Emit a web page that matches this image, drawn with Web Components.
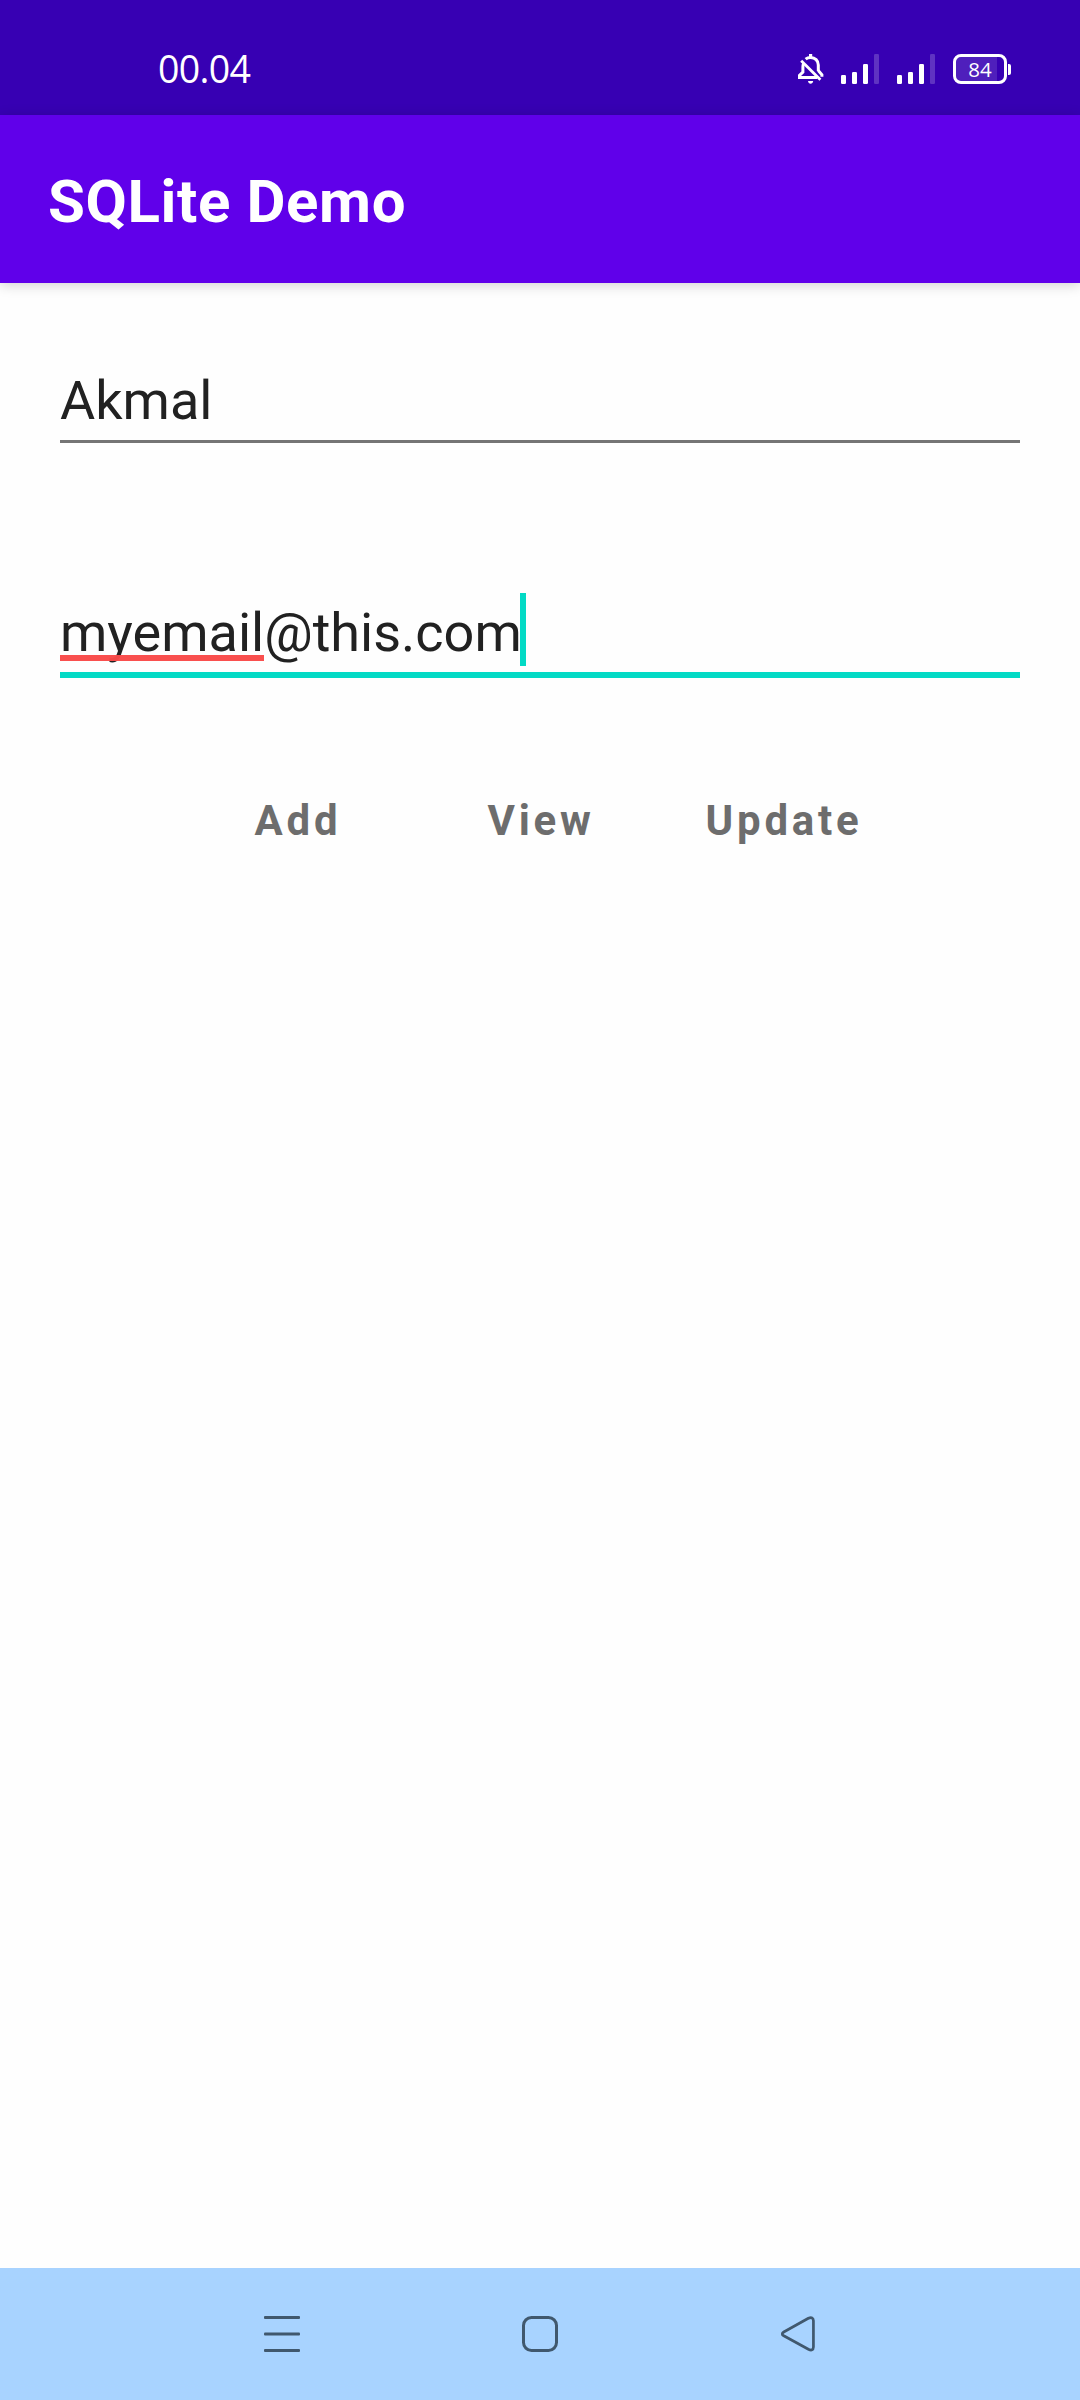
<!DOCTYPE html>
<html lang="en">
<head>
<meta charset="utf-8">
<title>SQLite Demo</title>
<style>
html,body{margin:0;padding:0}
body{width:1080px;height:2400px;overflow:hidden;background:#fefefe;font-family:Roboto,sans-serif}
</style>
</head>
<body>
<demo-screen></demo-screen>
<script>
const define = (name, html) => customElements.define(name, class extends HTMLElement {
  constructor() {
    super();
    this.attachShadow({ mode: 'open' }).innerHTML = html;
  }
});

define('mute-icon', `
<style>:host{display:block;width:26px;height:30px}svg{display:block}</style>
<svg width="26" height="30" viewBox="0 0 26 30" fill="none" stroke="#fff" stroke-width="3">
  <path d="M7.600 5.200C9 4 10.700 3.400 12.600 3.400c4.600 0 7.700 3.300 7.700 7.600v6"/>
  <path d="M5.600 9.300c-.5 1-.7 2.200-.7 3.400v5.300L1.500 21.300v2.200H19"/>
  <path d="M3.200 6.800 22.400 25.700" stroke-width="2.800"/>
  <path d="M20.300 16.600l3.600 4.200v2"/>
  <path d="M11 3V0h3.200v3zM10 27h5.200c-.3 1.700-1.200 2.800-2.600 2.800S10.300 28.700 10 27z" fill="#fff" stroke="none"/>
</svg>`);

define('signal-icon', `
<style>:host{display:block;width:38px;height:30px}svg{display:block}</style>
<svg width="38" height="30" viewBox="0 0 38 30" fill="#fff">
  <rect x="0" y="21" width="5" height="9" rx="1.2"/>
  <rect x="11" y="18" width="5" height="12" rx="1.2"/>
  <rect x="22" y="10" width="5" height="20" rx="1.2"/>
  <rect x="33" y="0" width="5" height="30" rx="1.2" opacity=".2"/>
</svg>`);

define('battery-icon', `
<style>
:host{display:flex;align-items:center;gap:1px;height:30px}
.cell{box-sizing:border-box;width:54px;height:30px;border:3px solid #fff;border-radius:8px;display:flex;align-items:center;justify-content:center;
background:linear-gradient(90deg,rgba(255,255,255,.12) 41px,transparent 41px) padding-box;color:#fff;font:400 20.500px/24px "Open Sans",sans-serif}
.tip{width:3px;height:11px;background:#fff;border-radius:0 2px 2px 0}
</style>
<div class="cell"><slot></slot></div><div class="tip"></div>`);

define('status-bar', `
<style>
:host{box-sizing:border-box;display:flex;align-items:flex-start;justify-content:space-between;height:115px;padding:54px 69px 0 158px;background:#3700b3}
.time{color:#fff;font:400 37.500px/29px "Open Sans",sans-serif;letter-spacing:-.7px}
.icons{display:flex;align-items:center}
signal-icon{margin-right:18px}
mute-icon{margin-right:17px}
</style>
<div class="time"><slot></slot></div>
<div class="icons"><mute-icon></mute-icon><signal-icon></signal-icon><signal-icon></signal-icon><battery-icon>84</battery-icon></div>`);

define('app-bar', `
<style>
:host{box-sizing:border-box;display:flex;align-items:center;height:168px;padding:5px 48px 0;background:#6000ea;color:#fff;
font:700 60px/70px Roboto,sans-serif;letter-spacing:.6px;box-shadow:0 2px 12px rgba(0,0,0,.18)}
</style><slot></slot>`);

define('text-field', `
<style>
:host{display:flex;box-sizing:border-box;height:79px;align-items:flex-start;border-bottom:3px solid #757575;color:#212121;font:400 54px/73px Roboto,sans-serif}
:host([focused]){height:85px;line-height:79px;border-bottom:6px solid #03dac5}
.caret{display:none;width:6px;height:73px;margin-left:-2px;background:#03dac5}
:host([focused]) .caret{display:block}
</style><slot></slot><span class="caret"></span>`);

define('misspelled-word', `
<style>
:host{display:inline-block;position:relative}
:host::after{content:"";position:absolute;left:0;right:0;top:62px;height:6px;background:#f94948;opacity:.97}
</style><slot></slot>`);

define('text-button', `
<style>
:host{box-sizing:border-box;display:flex;justify-content:center;align-items:center;width:243px;height:144px;color:#6d6d6d;
font:700 42px/50px Roboto,sans-serif;letter-spacing:3.75px}
</style><slot></slot>`);

define('nav-bar', `
<style>
:host{box-sizing:border-box;display:flex;justify-content:center;gap:222px;height:132px;padding-top:48px;background:#a8d3ff}
svg{display:block}
</style>
<svg width="36" height="36" fill="#40586e"><rect width="36" height="3" rx="1"/><rect y="16.500" width="36" height="3" rx="1"/><rect y="33" width="36" height="3" rx="1"/></svg>
<svg width="36" height="36" fill="none" stroke="#40586e" stroke-width="3"><rect x="1.500" y="1.500" width="33" height="33" rx="8"/></svg>
<svg width="36" height="36" fill="none" stroke="#40586e" stroke-width="2.800" stroke-linejoin="round"><path d="M1.900 15.600 27.300 1.900Q32.300-.2 32.500 4.500V30.500Q32.300 35.200 27.300 32.900L1.900 19.400Q-1.200 17.500 1.900 15.600Z" transform="translate(1.900 .4) scale(.97 1)"/></svg>`);

define('demo-screen', `
<style>
:host{display:flex;flex-direction:column;width:1080px;height:2400px}
app-bar{position:relative}
main{flex:1;display:flex;flex-direction:column;padding:81px 60px 0}
text-field[focused]{margin-top:150px}
.actions{display:flex;justify-content:center;margin:71px 0 0 2px}
</style>
<status-bar>00.04</status-bar>
<app-bar>SQLite Demo</app-bar>
<main>
  <text-field>Akmal</text-field>
  <text-field focused><misspelled-word>myemail</misspelled-word>@this.com</text-field>
  <div class="actions"><text-button>Add</text-button><text-button>View</text-button><text-button>Update</text-button></div>
</main>
<nav-bar></nav-bar>`);
</script>
</body>
</html>
